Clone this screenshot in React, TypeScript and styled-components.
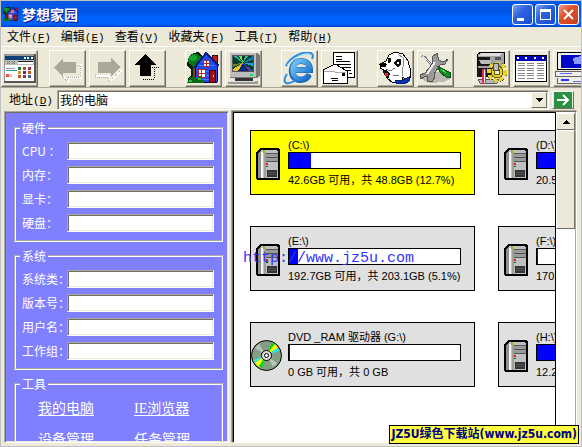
import React from "react";
import styled, { createGlobalStyle, css } from "styled-components";

const beige = "#ece9d8";
const shade = "#aca899";
const dark = "#716f64";
const songti = `"Noto Sans CJK SC", sans-serif`;

const GlobalStyle = createGlobalStyle`
  * { box-sizing: border-box; }
  html, body, #root { height: 100%; margin: 0; }
  body { overflow: hidden; font: 12px/14px ${songti}; color: #000; }
  button, input { font: inherit; color: inherit; margin: 0; }
`;

const Window = styled.div`
  height: 100%;
  display: flex;
  flex-direction: column;
  overflow: hidden;
  background: ${beige};
  border: 1px solid #c0c0c0;
`;

const TitleBar = styled.header`
  flex: none;
  display: flex;
  align-items: center;
  height: 26px;
  padding: 0 2px;
  gap: 3px;
  background: linear-gradient(#0058e6, #0054e3 45%, #0062fc 60%, #0062fc 88%, #0043cf);
`;

const Title = styled.h1`
  flex: 1;
  margin: 0;
  font: 700 14px/20px ${songti};
  color: #fff;
  text-shadow: 1px 1px 0 #0f1089;
`;

const Controls = styled.div`
  display: flex;
  gap: 2px;
`;

const ControlButton = styled.button<{ $close?: boolean }>`
  width: 21px;
  height: 21px;
  padding: 0;
  display: grid;
  place-items: center;
  border: 1px solid #fff;
  border-radius: 3px;
  background: ${(p) =>
    p.$close
      ? "linear-gradient(135deg, #f0a088, #e0512d 40%, #c9401c)"
      : "linear-gradient(135deg, #7ba2f0, #2e62de 40%, #1a4bd0)"};
`;

const MenuBar = styled.nav`
  flex: none;
  display: flex;
  height: 19px;
  align-items: center;
  padding-left: 6px;
  gap: 10px;
`;

const MenuItem = styled.button`
  padding: 0;
  border: 0;
  background: none;
  white-space: nowrap;
`;

const Accel = styled.span`
  font: 11px/14px "Liberation Mono", monospace;
`;

const ToolBar = styled.div`
  flex: none;
  display: flex;
  gap: 19px;
  height: 42px;
  padding-top: 3px;
  overflow: hidden;
  border-top: 1px solid #fff;
  border-bottom: 1px solid ${shade};
`;

const ToolGroup = styled.div<{ $wide?: boolean }>`
  display: flex;
  gap: ${(p) => (p.$wide ? "11px" : "3px")};
`;

const ToolButton = styled.button`
  flex: none;
  width: 37px;
  height: 37px;
  padding: 1px;
  background: ${beige};
  border: 1px solid;
  border-color: #fff ${dark} ${dark} #fff;
  box-shadow: inset -1px -1px ${shade};
  svg { display: block; }
`;

const AddressBar = styled.form`
  flex: none;
  display: flex;
  align-items: center;
  height: 20px;
  margin: 2px 0 1px;
  padding: 0 7px 0 8px;
  gap: 3px;
`;

const AddressLabel = styled.label`
  width: 45px;
  white-space: nowrap;
`;

const sunken = css`
  border: 1px solid;
  border-color: ${shade} #fff #fff ${shade};
  box-shadow: inset 1px 1px ${dark}, inset -1px -1px ${beige};
`;

const AddressBox = styled.div`
  flex: 1;
  display: flex;
  height: 20px;
  padding: 1px;
  background: #fff;
  ${sunken}
`;

const AddressInput = styled.input`
  flex: 1;
  min-width: 0;
  padding: 0 1px;
  border: 0;
  background: none;
`;

const raised = css`
  padding: 0;
  display: grid;
  place-items: center;
  background: ${beige};
  border: 1px solid;
  border-color: #fff ${dark} ${dark} #fff;
`;

const DropButton = styled.button`
  width: 16px;
  ${raised}
`;

const GoButton = styled.button`
  width: 22px;
  height: 18px;
  ${raised}
`;

const Body = styled.main`
  flex: 1;
  min-height: 0;
  display: flex;
  gap: 3px;
  padding: 0 4px 3px 3px;
`;

const SidePanel = styled.aside`
  flex: none;
  width: 225px;
  padding: 9px 5px 0 9px;
  overflow: hidden;
  color: #fff;
  background: #8080ff;
  ${sunken}
`;

const Group = styled.fieldset`
  margin: 0 0 7px;
  padding: 7px 7px 8px 6px;
  border: 2px groove #fff;
`;

const Legend = styled.legend`
  padding: 0 2px;
  margin-left: -2px;
  line-height: 14px;
`;

const Field = styled.label`
  display: flex;
  align-items: center;
  height: 18px;
  & + & { margin-top: 6px; }
`;

const FieldName = styled.span`
  flex: none;
  width: 45px;
  white-space: nowrap;
`;

const FieldInput = styled.input`
  flex: 1;
  min-width: 0;
  height: 18px;
  padding: 0 3px;
  color: #000;
  background: #fff;
  ${sunken}
`;

const Links = styled.div`
  display: grid;
  grid-template-columns: 96px 1fr;
  row-gap: 14px;
  padding: 2px 0 0 16px;
`;

const ToolLink = styled.a`
  justify-self: start;
  font: 14px/17px "Liberation Serif", ${songti};
  color: #fff;
  text-decoration: underline;
  text-underline-offset: 2px;
`;

const DrivePane = styled.section`
  flex: 1;
  min-width: 0;
  position: relative;
  display: flex;
  background: #fff;
  border: 1px solid;
  border-color: ${dark} #fff #fff ${dark};
  box-shadow: inset 1px 1px #000, -1px -1px ${shade};
`;

const DriveGrid = styled.div`
  flex: 1;
  min-width: 0;
  overflow: hidden;
  display: grid;
  grid-template-columns: 225px 225px;
  grid-auto-rows: 65px;
  gap: 31px 23px;
  padding: 18px 0 0 17px;
  border-right: 1px solid #000;
`;

const DriveCard = styled.article<{ $active?: boolean }>`
  display: grid;
  grid-template-columns: 31px 173px;
  align-items: center;
  gap: 6px;
  border: 1px solid #000;
  background: ${(p) => (p.$active ? "#ff0" : "#e0e0e0")};
`;

const DriveIcon = styled.div<{ $disc?: boolean }>`
  padding: ${(p) => (p.$disc ? "2px 0 0" : "2px 0 0 5px")};
  svg { display: block; }
`;

const DriveText = styled.div`
  font: 11px/14px "Liberation Sans", ${songti};
  white-space: nowrap;
`;

const Meter = styled.div`
  height: 17px;
  margin-bottom: 4px;
  border: 1px solid #000;
  background: #fff;
`;

const MeterFill = styled.div`
  height: 100%;
  background: #00f;
`;

const ScrollBar = styled.div`
  flex: none;
  width: 20px;
  display: flex;
  flex-direction: column;
  padding-top: 1px;
  background: #fff;
  border-right: 1px solid ${shade};
`;

const ScrollButton = styled.button`
  height: 17px;
  ${raised}
`;

const ScrollThumb = styled.div`
  height: 99px;
  ${raised}
`;

const Watermark = styled.span`
  position: absolute;
  left: 10px;
  top: 138px;
  font: 15px/18px "Liberation Mono", monospace;
  color: #33f;
`;

const Badge = styled.a`
  position: absolute;
  right: 3px;
  bottom: 3px;
  padding: 0 1px;
  border: 1px solid #000;
  background: #ffff40;
  color: #000080;
  font: 700 12px/17px "DejaVu Sans Condensed", ${songti};
  text-decoration: none;
  white-space: nowrap;
`;

const Art = ({ children, crisp = true }: { children: React.ReactNode; crisp?: boolean }) => (
  <svg width="33" height="33" viewBox="2 2 33 33" shapeRendering={crisp ? "crispEdges" : "auto"} aria-hidden>
    {children}
  </svg>
);

const HouseShapes = () => (
  <>
    <path d="M3 9l3-5 7-2 5 4 1 8-4 6 2 8-2 4H4l-1-4 3-3v-5l-4-4z" fill="#021" />
    <ellipse cx="10" cy="10" rx="7" ry="6" fill="#08751a" />
    <ellipse cx="8" cy="8" rx="4" ry="3" fill="#15a32b" />
    <path d="M8 16h3v14H8z" fill="#854018" />
    <path d="M27 5h5v10h-5z" fill="#d01818" stroke="#300" />
    <path d="M10 18L21 3l12 12-1 17H11z" fill="#204bea" stroke="#002" />
    <path d="M9 18L21 3l13 13" fill="none" stroke="#0b1d77" strokeWidth="2" />
    <path d="M17 11h7M14 15h15M13 21h18M13 25h18M13 29h18" stroke="#4b7dff" />
    <path d="M18 10h6v6h-6zM13 19h7v8h-7z" fill="#fff" stroke="#b22" />
    <path d="M21 10v6M18 13h6M16 19v8M13 23h7" stroke="#b22" />
    <path d="M24 20h6v12h-6z" fill="#a80c10" stroke="#400" />
    <path d="M28 25h1v2h-1z" fill="#ff0" />
    <path d="M2 33l3-6 4-1 2 3 4-4 4 8z" fill="#076a13" />
    <path d="M4 30h3v2H4zM13 28h3v2h-3z" fill="#32be3c" />
  </>
);

const HouseArt = () => <Art><HouseShapes /></Art>;

const swatches: [number, number, string][] = [
  [17, 17, "#287848"], [22, 17, "#9d5526"], [27, 17, "#a33154"],
  [17, 21, "#d29b28"], [22, 21, "#562c88"], [27, 21, "#c45617"],
  [17, 25, "#c95427"], [22, 25, "#8b344b"], [27, 25, "#4f5e9b"],
];

const BrowserArt = () => (
  <Art>
    <path d="M3 4h32v29H3z" fill="#555" />
    <path d="M3 4h30v27H3z" fill="#fff" />
    <path d="M3 4h30v2H3zM3 4h1v27H3z" fill="#999" />
    <path d="M4 6h29v4H4z" fill="#103f73" />
    <path d="M23 7h2v2h-2zM26 7h2v2h-2zM30 7h2v2h-2z" fill="#fff" />
    <path d="M4 10h29v5H4z" fill="#bdbdb8" />
    <path d="M17 11h15v3H17z" fill="#fff" /><path d="M17 11h15v1H17z" fill="#222" />
    <path d="M6 11l3 3m0-3l-3 3M11 11l3 3m0-3l-3 3" stroke="#777" />
    <path d="M5 18h9v1H5z" fill="#999" />
    <path d="M5 20h11v1H5z" fill="#29b" />
    <path d="M5 24h3v3H5z" fill="#e54" /><path d="M8 24h3v3H8z" fill="#fba" />
    {swatches.map(([x, y, c]) => <rect key={`${x}-${y}`} x={x} y={y} width="3" height="3" fill={c} />)}
  </Art>
);

const BackArt = () => (
  <Art>
    <path d="M29 15h3v13H19v3l-5-5" fill="none" stroke="#fff" strokeWidth="2" />
    <path d="M28 15h3v12H18v4l-5-5" fill="none" stroke={shade} strokeDasharray="1 1" />
    <path d="M5 17l9-9v4h13v11H14v4z" fill={shade} />
  </Art>
);

const ForwardArt = () => (
  <Art>
    <path d="M6 26h14v4l4-1 9-9" fill="none" stroke="#fff" strokeWidth="2" />
    <path d="M6 25v2h13v4h2l11-11" fill="none" stroke={shade} strokeDasharray="1 1" />
    <path d="M31 17l-9-9v4H9v11h13v4z" fill={shade} />
  </Art>
);

const UpArt = () => (
  <Art>
    <path d="M23 17h7" stroke="#000" strokeDasharray="1 1" fill="none" />
    <path d="M25 17v11M14 29h12" stroke="#000" strokeDasharray="1 1" fill="none" />
    <path d="M16 4l-10 11h5v11h11V15h5z" fill="#000" />
  </Art>
);

const MonitorArt = () => (
  <Art>
    <path d="M5 3h27l3 3v20l-3 2H5z" fill="#777" />
    <path d="M4 2h27v25H4z" fill="#bdbdbd" />
    <path d="M4 2h27v1H5v24H4z" fill="#eee" />
    <path d="M7 5h22v17H7z" fill="#555" />
    <path d="M8 6h20v15H8z" fill="#053d35" />
    <path d="M18 13L8 6h4zM18 13l2-7h3z" fill="#18c4a0" />
    <path d="M18 13l-4-7h3z" fill="#89dc46" />
    <path d="M18 13l10-7v4z" fill="#137aaa" />
    <path d="M18 13l10 0v3z" fill="#19a7ef" />
    <path d="M18 13l10 8h-4z" fill="#6039c4" />
    <path d="M18 13l2 8h-5z" fill="#131cb1" />
    <path d="M18 13l-5 8H8v-2z" fill="#e5c328" />
    <path d="M18 13L8 17v-3z" fill="#688724" />
    <path d="M25 24h3v2h-3z" fill="#0e5" />
    <path d="M10 28h18v3H10z" fill="#333" />
    <path d="M3 31h30v3H3z" fill="#999" /><path d="M2 31h28v1H2z" fill="#ddd" />
  </Art>
);

const ExplorerArt = () => (
  <Art crisp={false}>
    <defs>
      <linearGradient id="ieBlue" x1="0" y1="0" x2="1" y2="1">
        <stop offset="0" stopColor="#75cafa" /><stop offset="1" stopColor="#1168c8" />
      </linearGradient>
    </defs>
    <path d="M28 25c-3 6-12 7-16 1-3-6 0-15 8-15 6 0 9 4 9 9H14" fill="none" stroke="#1d65b2" strokeWidth="6" />
    <path d="M28 24c-3 6-12 7-15 1-3-6 0-14 7-14 6 0 9 4 9 9H14" fill="none" stroke="url(#ieBlue)" strokeWidth="5" />
    <path d="M5 16C9 7 25-1 31 4c1 1 1 3 0 5M6 24c-4 6-3 10 2 9 3 0 5-2 8-4" fill="none" stroke="#2b8be0" strokeWidth="2" />
    <path d="M6 15C12 7 23 3 29 5" fill="none" stroke="#9bddff" />
  </Art>
);

const LetterArt = () => (
  <Art>
    <path d="M12 2h22v26H12z" fill="#000" /><path d="M13 3h20v24H13z" fill="#fff" />
    <path d="M15 6h6v1h-6zM15 9h6v1h-6zM15 11h14v1H15zM15 14h15v1H15zM18 17h12v1H18zM22 20h8v1h-8zM28 23h3v1h-3z" fill="#000" />
    <path d="M2 20l12-6 12 7v12H2z" fill="#fff" stroke="#000" />
    <path d="M3 21l11 1h11" stroke="#aaa" fill="none" />
    <path d="M21 23h3v3h-3z" fill="#000" />
    <path d="M10 28h7v1h-7zM11 30h6v1h-6z" fill="#000" />
  </Art>
);

const DogArt = () => (
  <Art>
    <path d="M9 11l3-6 6-3 8 2 5 7 3 11-1 6-4 2-3-3-1 5-9 1-6-5-3-8-4-2v-4l4-2z" fill="#fff" stroke="#000" />
    <path d="M21 4l5 4 1 6-2 6 1 6" fill="none" stroke="#888" />
    <path d="M2 14l4-2 4 2-1 3H4l-2-2z" fill="#000" />
    <path d="M11 8h3v3l-2 2h-1zM17 12l3-3h4v5l-3 3-3-2z" fill="#111" />
    <path d="M20 12h2v2h-2z" fill="#fff" />
    <path d="M9 19l4 2 5-3M16 25l6 1" fill="none" stroke="#777" />
    <path d="M6 20h3l4 4-2 5-4-4z" fill="#111" />
    <path d="M8 23h3v3H8z" fill="#f20" />
    <path d="M18 30l8 0 6-3v4l-4 3-9-1z" fill="#0934b5" stroke="#002078" />
  </Art>
);

const ToolsArt = () => (
  <Art>
    <path d="M7 26l8-4 16 1 2 6-6 3-14 1-7-3z" fill="#b9b7ae" />
    <path d="M4 6l4 1 3 4 9 9" stroke="#777" strokeWidth="2" fill="none" /><path d="M4 5l7 6 8 8" stroke="#ddd" fill="none" />
    <path d="M20 3l-5 4 1 6-8 10-5 2 1 4 5-3 2 1-1 4 5 1 3-5-1-3 6-9 5-1 3-5-5 3-4-2z" fill="#999" stroke="#555" />
    <path d="M18 12L10 24" stroke="#e7e7e7" strokeWidth="2" />
    <path d="M21 17l3 1 10 5-1 5-4-1-6-5z" fill="#158b25" stroke="#064d12" /><path d="M24 19l5 4" stroke="#5cdd57" />
  </Art>
);

const GearArt = () => (
  <Art>
    <path d="M4 5l4-3h23v12l-4 4H4z" fill="#a3a3a3" stroke="#000" />
    <path d="M8 3h21l-3 3H6z" fill="#ddd" />
    <path d="M5 7h12v9H5zM4 18h16v9H4z" fill="#181818" />
    <path d="M6 10h12v4H8z" fill="#bbb" /><path d="M22 7h6v3h-6z" fill="#555" />
    <path d="M5 29h21l-2 4H7z" fill="#bbb" stroke="#555" />
    <circle cx="24" cy="22" r="8" fill="none" stroke="#544b00" strokeWidth="5" strokeDasharray="4 2" />
    <circle cx="24" cy="22" r="8" fill="none" stroke="#e7d22b" strokeWidth="4" strokeDasharray="4 2" />
    <circle cx="24" cy="22" r="6" fill="#e7d22b" stroke="#665a00" />
    <circle cx="24" cy="22" r="3" fill={beige} stroke="#665a00" />
    <path d="M20 13h5v7h-5z" fill="#bbb" stroke="#444" />
    <path d="M9 19h4v15H9z" fill="#e9265b" /><path d="M11 20h1v13h-1z" fill="#fff" />
  </Art>
);

const TableArt = () => (
  <Art>
    <path d="M2 5h32v27H2z" fill="#000" /><path d="M3 6h30v25H3z" fill="#fff" />
    <path d="M3 6h30v5H3z" fill="#0000c0" />
    {[4, 12, 21, 29].map((x) => <rect key={x} x={x} y="7" width="2" height="2" fill="#fff" />)}
    {[5, 14, 24].map((x) => (
      <path
        key={x}
        d={[13, 15, 18, 20, 23, 25, 28].map((y) => `M${x} ${y}h7v1h-7z`).join("")}
        fill="#888"
      />
    ))}
  </Art>
);

const ComputerArt = () => (
  <Art>
    <path d="M4 2h31v18H4z" fill="#000" /><path d="M5 3h30v16H5z" fill="#eee" /><path d="M8 5h27v13H8z" fill="#0008c8" />
    <path d="M20 8l8-2v8h-7z" fill="#8c98ff" />
    <path d="M2 21h33v6H2zM4 28h31v6H4z" fill="#666" /><path d="M3 22h32v4H3zM5 28h30v5H5z" fill="#eee" />
    <path d="M8 29h8v2H8z" fill="#23f" /><path d="M7 23h12v1H7zM20 31h10v1H20z" fill="#66f" />
  </Art>
);

const TowerIcon = () => (
  <svg width="24" height="32" viewBox="0 0 24 32" shapeRendering="crispEdges" aria-hidden>
    <path d="M4 0h18l2 2v30H1l-1-1V4z" fill="#000" />
    <path d="M5 2h16l1 2v26H2V5z" fill="#c0c0c0" />
    <path d="M2 5l3-2v27H2z" fill="#909090" /><path d="M5 4h2v26H5z" fill="#f4f4f4" />
    <path d="M8 4h2v26H8z" fill="#a0a090" /><path d="M7 2h2v3H7z" fill="#9b2" />
    <path d="M10 5h12v1H10zM10 9h12v1H10zM10 13h12v1H10z" fill="#555" />
    <path d="M10 6h12v3H10zM10 10h12v3H10z" fill="#999" />
    <path d="M10 15h2v2h-2z" fill="#e12" /><path d="M10 18h2v1h-2z" fill="#063" />
    <path d="M11 22h10v7H11z" fill="#333" /><path d="M12 24h8v1h-8zM12 26h8v1h-8z" fill="#555" />
  </svg>
);

const DiscIcon = () => (
  <svg width="31" height="31" viewBox="0 0 31 31" aria-hidden>
    <circle cx="15.5" cy="15.5" r="15" fill="#849e84" stroke="#000" />
    <path d="M15 15L21 3l4 2z" fill="#0d0" /><path d="M15 15L24 4l3 4z" fill="#ff0" /><path d="M15 15l12-7 1 3z" fill="#2ee" />
    <path d="M15 15L3 20l1 3z" fill="#2ee" /><path d="M15 15L4 23l4 4z" fill="#ff0" /><path d="M15 15L8 26l3 2z" fill="#0d0" />
    <path d="M14 14L4 8l4-4z" fill="#b8c6b8" /><path d="M17 17l5 10 4-4z" fill="#b8c6b8" />
    <circle cx="15.5" cy="15.5" r="5" fill="#ddd" stroke="#000" /><circle cx="15.5" cy="15.5" r="2" fill="#fff" stroke="#000" />
  </svg>
);

const menus = [["文件", "F"], ["编辑", "E"], ["查看", "V"], ["收藏夹", "F"], ["工具", "T"], ["帮助", "H"]];

type Tool = [string, () => React.JSX.Element];
const toolGroups: Tool[][] = [
  [["主页", HouseArt], ["显示", MonitorArt]],
  [["浏览器", ExplorerArt], ["邮件", LetterArt]],
  [["搜索", DogArt], ["工具", ToolsArt]],
  [["设置", GearArt], ["列表", TableArt], ["电脑", ComputerArt]],
];

const ToolSet = ({ tools }: { tools: Tool[] }) => (
  <ToolGroup>
    {tools.map(([name, Picture]) => (
      <ToolButton key={name} type="button" aria-label={name}><Picture /></ToolButton>
    ))}
  </ToolGroup>
);

const fieldGroups = [
  { title: "硬件", fields: ["CPU ：", "内存：", "显卡：", "硬盘："] },
  { title: "系统", fields: ["系统类：", "版本号：", "用户名：", "工作组："] },
];

const drives = [
  { name: "(C:\\)", info: "42.6GB 可用，共 48.8GB (12.7%)", used: 12.7, active: true },
  { name: "(D:\\)", info: "20.5GB 可用", used: 58 },
  { name: "(E:\\)", info: "192.7GB 可用，共 203.1GB (5.1%)", used: 5.1 },
  { name: "(F:\\)", info: "170.1GB 可用", used: 0.6 },
  { name: "DVD _RAM 驱动器 (G:\\)", info: "0 GB 可用，共 0 GB", used: 0.6, disc: true },
  { name: "(H:\\)", info: "12.2GB 可用", used: 70 },
];

export default function App() {
  return (
    <Window>
      <GlobalStyle />
      <TitleBar>
        <svg width="16" height="16" viewBox="1 1 34 34" aria-hidden><HouseShapes /></svg>
        <Title>梦想家园</Title>
        <Controls>
          <ControlButton type="button" aria-label="最小化">
            <svg width="15" height="15" aria-hidden><path d="M2 11h7v3H2z" fill="#fff" /></svg>
          </ControlButton>
          <ControlButton type="button" aria-label="最大化">
            <svg width="15" height="15" aria-hidden><path d="M2 2h11v11H2zM3 5v7h9V5z" fill="#fff" fillRule="evenodd" /></svg>
          </ControlButton>
          <ControlButton type="button" aria-label="关闭" $close>
            <svg width="15" height="15" aria-hidden><path d="M3 3l9 9M12 3l-9 9" stroke="#fff" strokeWidth="2" /></svg>
          </ControlButton>
        </Controls>
      </TitleBar>
      <MenuBar>
        {menus.map(([name, key]) => (
          <MenuItem key={name} type="button">{name}<Accel>(<u>{key}</u>)</Accel></MenuItem>
        ))}
      </MenuBar>
      <ToolBar>
        <ToolGroup $wide>
          <ToolButton type="button" aria-label="视图"><BrowserArt /></ToolButton>
          <ToolSet tools={[["后退", BackArt], ["前进", ForwardArt], ["向上", UpArt]]} />
        </ToolGroup>
        {toolGroups.map((tools) => <ToolSet key={tools[0][0]} tools={tools} />)}
      </ToolBar>
      <AddressBar>
        <AddressLabel htmlFor="address">地址<Accel>(<u>D</u>)</Accel></AddressLabel>
        <AddressBox>
          <AddressInput id="address" defaultValue="我的电脑" />
          <DropButton type="button" aria-label="展开地址">
            <svg width="8" height="4" shapeRendering="crispEdges" aria-hidden><path d="M0 0h8L4 4z" /></svg>
          </DropButton>
        </AddressBox>
        <GoButton type="button" aria-label="转到">
          <svg width="20" height="16" aria-hidden>
            <path d="M1 0h18v16H1z" fill="#299044" />
            <path d="M4 8h11M10 3l5 5-5 5" fill="none" stroke="#fff" strokeWidth="2" />
          </svg>
        </GoButton>
      </AddressBar>
      <Body>
        <SidePanel>
          {fieldGroups.map((group) => (
            <Group key={group.title}>
              <Legend>{group.title}</Legend>
              {group.fields.map((name) => (
                <Field key={name}><FieldName>{name}</FieldName><FieldInput /></Field>
              ))}
            </Group>
          ))}
          <Group>
            <Legend>工具</Legend>
            <Links>
              {["我的电脑", "IE浏览器", "设备管理", "任务管理"].map((name) => (
                <ToolLink key={name} href="#">{name}</ToolLink>
              ))}
            </Links>
          </Group>
        </SidePanel>
        <DrivePane>
          <DriveGrid>
            {drives.map((d) => (
              <DriveCard key={d.name} $active={d.active}>
                <DriveIcon $disc={d.disc}>{d.disc ? <DiscIcon /> : <TowerIcon />}</DriveIcon>
                <div>
                  <DriveText>{d.name}</DriveText>
                  <Meter role="progressbar" aria-label={d.name} aria-valuenow={d.used}>
                    <MeterFill style={{ width: `${d.used}%` }} />
                  </Meter>
                  <DriveText>{d.info}</DriveText>
                </div>
              </DriveCard>
            ))}
          </DriveGrid>
          <ScrollBar>
            <ScrollButton type="button" aria-label="向上滚动">
              <svg width="8" height="4" shapeRendering="crispEdges" aria-hidden><path d="M4 0l4 4H0z" /></svg>
            </ScrollButton>
            <ScrollThumb />
          </ScrollBar>
          <Watermark>http://www.jz5u.com</Watermark>
        </DrivePane>
      </Body>
      <Badge href="#">JZ5U绿色下载站(www.jz5u.com)</Badge>
    </Window>
  );
}
